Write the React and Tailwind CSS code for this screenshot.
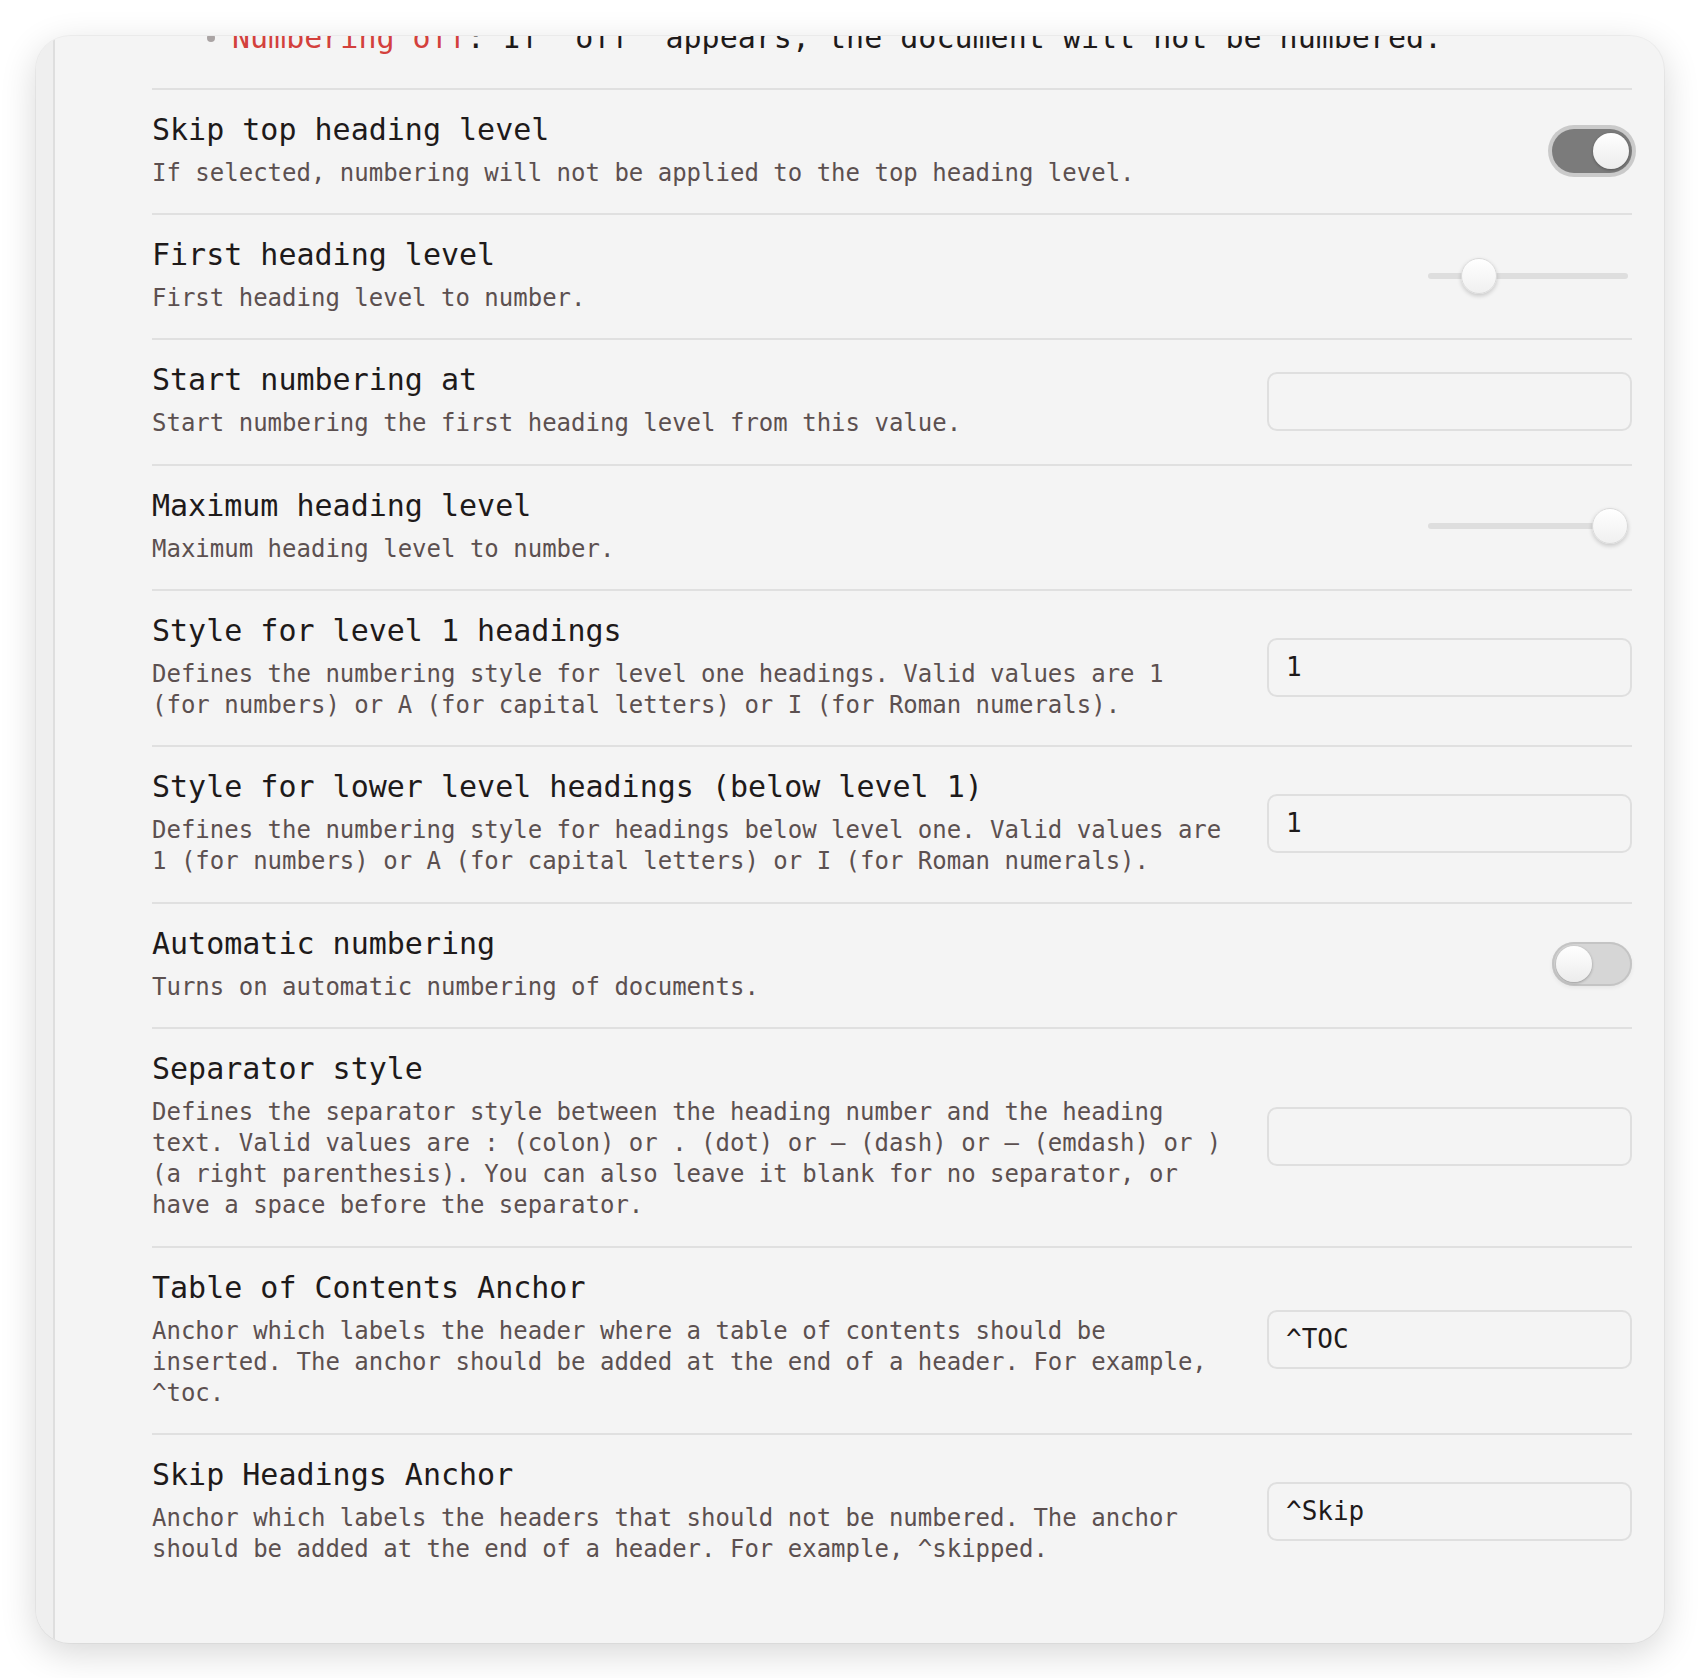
const mono = { fontFamily: '"DejaVu Sans Mono", "Liberation Mono", monospace' };

const settings = [
  {
    title: "Skip top heading level",
    desc: "If selected, numbering will not be applied to the top heading level.",
    control: { type: "toggle", on: true },
  },
  {
    title: "First heading level",
    desc: "First heading level to number.",
    control: { type: "slider", left: 33 },
  },
  {
    title: "Start numbering at",
    desc: "Start numbering the first heading level from this value.",
    control: { type: "input", value: "" },
  },
  {
    title: "Maximum heading level",
    desc: "Maximum heading level to number.",
    control: { type: "slider", left: 164 },
  },
  {
    title: "Style for level 1 headings",
    desc: "Defines the numbering style for level one headings. Valid values are 1 (for numbers) or A (for capital letters) or I (for Roman numerals).",
    control: { type: "input", value: "1" },
  },
  {
    title: "Style for lower level headings (below level 1)",
    desc: "Defines the numbering style for headings below level one. Valid values are 1 (for numbers) or A (for capital letters) or I (for Roman numerals).",
    control: { type: "input", value: "1" },
  },
  {
    title: "Automatic numbering",
    desc: "Turns on automatic numbering of documents.",
    control: { type: "toggle", on: false },
  },
  {
    title: "Separator style",
    desc: "Defines the separator style between the heading number and the heading text. Valid values are : (colon) or . (dot) or – (dash) or — (emdash) or ) (a right parenthesis). You can also leave it blank for no separator, or have a space before the separator.",
    control: { type: "input", value: "" },
  },
  {
    title: "Table of Contents Anchor",
    desc: "Anchor which labels the header where a table of contents should be inserted. The anchor should be added at the end of a header. For example, ^toc.",
    control: { type: "input", value: "^TOC" },
  },
  {
    title: "Skip Headings Anchor",
    desc: "Anchor which labels the headers that should not be numbered. The anchor should be added at the end of a header. For example, ^skipped.",
    control: { type: "input", value: "^Skip" },
  },
];

function Toggle({ on }) {
  if (on) {
    return (
      <div className="relative w-[80px] h-[44px] rounded-full bg-[#7b7b7b] shadow-[0_0_0_4px_#cacaca]">
        <div className="absolute right-[3px] top-[4px] w-[36px] h-[36px] rounded-full bg-gradient-to-b from-white to-[#ececec] shadow-[0_1px_3px_rgba(0,0,0,0.3)]" />
      </div>
    );
  }
  return (
    <div className="relative w-[80px] h-[44px] rounded-full bg-[#d6d6d6] shadow-[inset_0_0_0_2px_#c4c4c4,0_2px_4px_rgba(0,0,0,0.06)]">
      <div className="absolute left-[4px] top-[4px] w-[36px] h-[36px] rounded-full bg-gradient-to-b from-white to-[#ececec] shadow-[0_1px_3px_rgba(0,0,0,0.3)]" />
    </div>
  );
}

function Slider({ left }) {
  return (
    <div className="relative w-[200px] h-[36px] mr-[4px] flex items-center">
      <div className="w-full h-[6px] rounded-full bg-[#dedede]" />
      <div
        className="absolute top-0 w-[36px] h-[36px] rounded-full bg-gradient-to-b from-white to-[#f0f0f0] border border-[#dadada] shadow-[0_2px_4px_rgba(0,0,0,0.18)]"
        style={{ left }}
      />
    </div>
  );
}

function Control({ control }) {
  if (control.type === "toggle") return <Toggle on={control.on} />;
  if (control.type === "slider") return <Slider left={control.left} />;
  return (
    <input
      readOnly
      defaultValue={control.value}
      className="w-[365px] h-[59px] rounded-[10px] border-2 border-[#dfdfdf] bg-transparent pl-[17px] text-[26px] text-[#1e1a1a] outline-none"
      style={mono}
    />
  );
}

function SettingRow({ item }) {
  return (
    <div className="flex items-center border-t-2 border-[#e0e0e0] pt-[22px] pb-[24px]">
      <div className="flex-1 min-w-0 pr-[37px]">
        <div className="text-[30px] leading-[36px] text-[#1e1a1a]">{item.title}</div>
        <div className="mt-[10px] text-[24px] leading-[31.2px] text-[#5c5050]">{item.desc}</div>
      </div>
      <div className="w-[365px] shrink-0 flex justify-end">
        <Control control={item.control} />
      </div>
    </div>
  );
}

export default function App() {
  return (
    <div className="min-h-screen bg-white pt-[36px] px-[36px] pb-[35px]" style={mono}>
      <div className="h-[1607px] rounded-[34px] bg-[#f4f4f4] overflow-hidden flex shadow-[0_10px_36px_rgba(0,0,0,0.16),0_0_0_1px_rgba(0,0,0,0.04)]">
        <div className="w-[19px] shrink-0 bg-[#efefef] border-r-2 border-[#dedede]" />
        <div className="flex-1 pl-[97px] pr-[32px] -mt-[16px]">
          <div className="flex items-center h-[36px] pl-[55px] text-[30px] leading-[36px] text-[#1e1a1a] mb-[32px]">
            <span className="w-[8px] h-[8px] rounded-full bg-[#aaa4a4] mr-[17px]" />
            <span className="whitespace-pre">
              <span className="text-[#d3403c]">Numbering off</span>: If "off" appears, the document will not be numbered.
            </span>
          </div>
          {settings.map((item) => (
            <SettingRow key={item.title} item={item} />
          ))}
        </div>
      </div>
    </div>
  );
}
